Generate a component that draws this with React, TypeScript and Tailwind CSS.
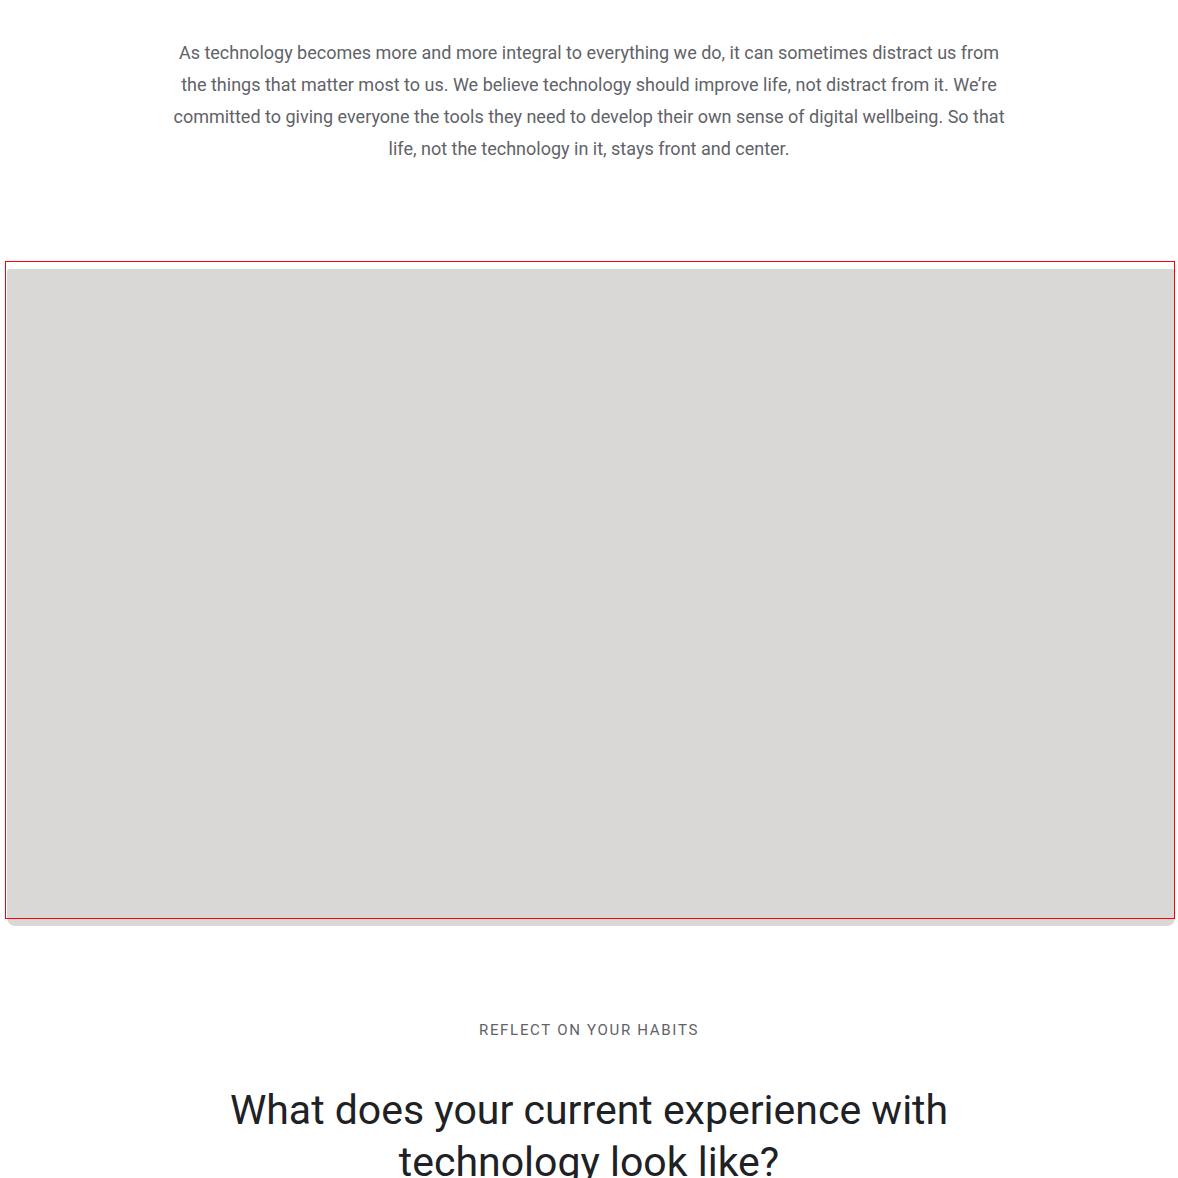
export default function App() {
  return (
    <div
      className="min-h-[1178px] bg-white"
      style={{ fontFamily: "Roboto, 'Liberation Sans', sans-serif" }}
    >
      <section className="flex justify-center px-4 pt-[37px]">
        <p className="max-w-[860px] text-center text-[18px] leading-[32px] text-[#5f6368]">
          As technology becomes more and more integral to everything we do, it can sometimes distract us from
          <br />
          the things that matter most to us. We believe technology should improve life, not distract from it. We’re
          <br />
          committed to giving everyone the tools they need to develop their own sense of digital wellbeing. So that
          <br />
          life, not the technology in it, stays front and center.
        </p>
      </section>

      {/* video placeholder */}
      <section className="relative ml-[5px] mr-[3px] mt-[96px] pt-[8px]">
        <div className="ml-[2px] h-[657px] rounded-b-[8px] rounded-t-[3px] bg-[#d9d8d7]" />
        <div className="pointer-events-none absolute left-0 right-0 top-0 h-[658px] border border-[#ff0000]" />
      </section>

      <section className="flex flex-col items-center pt-[94px]">
        <p className="text-[15px] leading-[20px] tracking-[1.7px] text-[#5f6368]">
          REFLECT ON YOUR HABITS
        </p>
        <h2 className="mt-[44px] max-w-[760px] text-center text-[41px] leading-[52px] text-[#202124]">
          What does your current experience with technology look like?
        </h2>
      </section>
    </div>
  );
}
